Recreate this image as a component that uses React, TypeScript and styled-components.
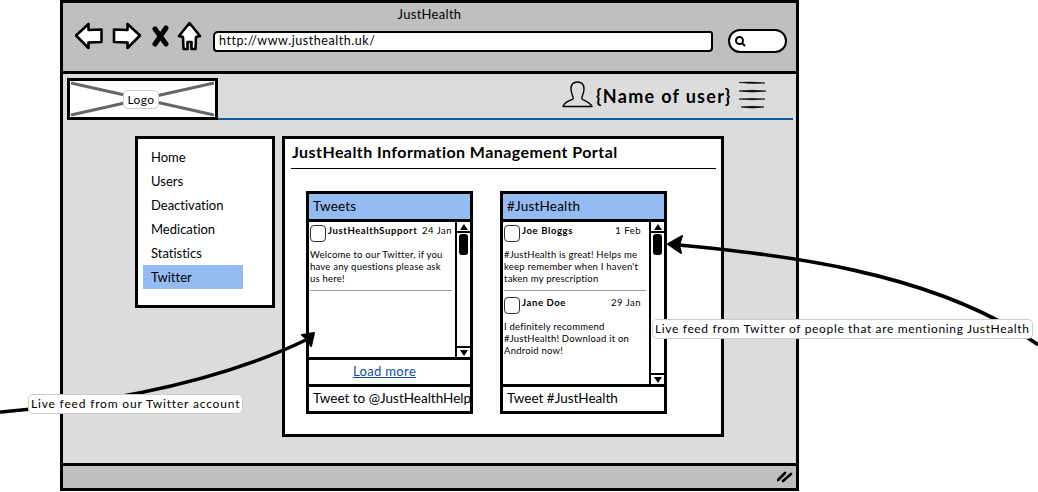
import React from 'react'
import styled, { createGlobalStyle } from 'styled-components'

const GlobalStyle = createGlobalStyle`
    html, body {
        margin: 0;
        padding: 0;
        background: #fff;
        font-family: "Lato", "Open Sans", sans-serif;
        font-variant-ligatures: none;
        color: #000;
    }
    * { box-sizing: border-box; }
`

const Page = styled.div`
    position: relative;
    width: 1038px;
    height: 492px;
    overflow: hidden;
    padding: 0 0 0 60px;
`

const Wireframe = styled.div`
    width: 739px;
    height: 491px;
    border: 3px solid #000;
    display: flex;
    flex-direction: column;
    background: #dcdcdc;
`

const Chrome = styled.div`
    height: 71px;
    flex: none;
    background: #bfbfbf;
    border-bottom: 3px solid #000;
    display: flex;
    flex-direction: column;
`

const WindowTitle = styled.div`
    text-align: center;
    font-size: 13px;
    line-height: 16px;
    margin-top: 3px;
    letter-spacing: 0.3px;
`

const Toolbar = styled.div`
    display: flex;
    align-items: flex-start;
    padding-left: 12px;
`

const NavIcon = styled.svg`
    display: block;
    flex: none;
`

const UrlBar = styled.div`
    width: 500px;
    height: 21px;
    margin: 9px 0 0 10px;
    background: #fff;
    border: 2.5px solid #000;
    border-radius: 5px 3px 4px 4px;
    font-size: 12.5px;
    line-height: 16px;
    padding-left: 4px;
    letter-spacing: 0.55px;
`

const SearchPill = styled.div`
    width: 59px;
    height: 24px;
    margin: 7px 0 0 15px;
    background: #fff;
    border: 2.5px solid #000;
    border-radius: 12px;
    display: flex;
    align-items: center;
    padding-left: 4px;
`

const Body = styled.div`
    flex: 1;
    display: flex;
    flex-direction: column;
`

const Header = styled.div`
    height: 42px;
    flex: none;
    display: flex;
    align-items: flex-start;
    margin: 4px 3px 0 4px;
    border-bottom: 2px solid #0f5aa5;
`

const LogoBox = styled.div`
    position: relative;
    width: 151px;
    height: 42px;
    flex: none;
    background: #fff;
    border: 3px solid #000;
    display: flex;
    align-items: center;
    justify-content: center;
`

const LogoCross = styled.svg`
    position: absolute;
    inset: 0;
    width: 100%;
    height: 100%;
`

const LogoLabel = styled.span`
    position: relative;
    background: #fff;
    border: 1px solid #ccc;
    border-radius: 5px;
    font-size: 12px;
    line-height: 17px;
    letter-spacing: 0.4px;
    padding: 0 3px;
    margin-left: -3px;
`

const UserArea = styled.div`
    flex: 1;
    display: flex;
    align-items: flex-start;
    padding: 3px 0 0 344px;
`

const UserName = styled.span`
    font-size: 18px;
    font-weight: 700;
    line-height: 24px;
    letter-spacing: 1.3px;
    margin: 3px 0 0 3px;
    white-space: nowrap;
`

const Content = styled.div`
    flex: 1;
    display: flex;
    align-items: flex-start;
    gap: 7px;
    padding: 16px 0 0 72px;
`

const SideMenu = styled.nav`
    width: 140px;
    height: 172px;
    flex: none;
    background: #fff;
    border: 3px solid #000;
    padding: 6px 0 0 5px;
`

const MenuItem = styled.div<{ $active?: boolean }>`
    width: 100px;
    height: 24px;
    padding-left: 8px;
    font-size: 13px;
    line-height: 24px;
    background: ${(p) => (p.$active ? '#94bbf2' : 'transparent')};
`

const MainPanel = styled.main`
    width: 442px;
    height: 301px;
    flex: none;
    background: #fff;
    border: 3px solid #000;
    padding: 0 5px 0 6px;
`

const MainTitle = styled.h1`
    margin: 0;
    height: 30px;
    padding-left: 1px;
    font-size: 16px;
    line-height: 26px;
    font-weight: 700;
    letter-spacing: 0.43px;
    border-bottom: 1.5px solid #000;
`

const Columns = styled.div`
    display: flex;
    gap: 27px;
    padding: 22px 0 0 15px;
`

const Feed = styled.section`
    width: 167px;
    height: 223px;
    border: 3px solid #000;
    display: flex;
    flex-direction: column;
    background: #fff;
`

const FeedHeader = styled.div`
    height: 25px;
    flex: none;
    background: #94bbf2;
    font-size: 13.5px;
    line-height: 24px;
    padding-left: 4px;
    letter-spacing: 0.2px;
`

const FeedBody = styled.div`
    flex: 1;
    min-height: 0;
    display: flex;
    border-top: 3px solid #000;
`

const PostList = styled.div`
    flex: 1;
    min-width: 0;
    padding: 3px 3px 0 1px;
`

const Post = styled.article<{ $divider?: boolean }>`
    border-bottom: ${(p) => (p.$divider ? '1.5px solid #9a9a9a' : '0')};
    padding-bottom: 5px;
    margin-bottom: 6px;
`

const PostHead = styled.div`
    display: flex;
    height: 24px;
`

const Avatar = styled.span`
    width: 16px;
    height: 17px;
    flex: none;
    background: #fff;
    border: 1.5px solid #333;
    border-radius: 4px;
`

const PostAuthor = styled.span`
    font-size: 9.5px;
    line-height: 12px;
    font-weight: 700;
    margin-left: 2px;
    letter-spacing: 0.6px;
    white-space: nowrap;
`

const PostDate = styled.span<{ $inset?: number }>`
    margin-left: auto;
    margin-right: ${(p) => p.$inset ?? 0}px;
    font-size: 9.5px;
    line-height: 12px;
    letter-spacing: 0.5px;
    white-space: nowrap;
`

const PostText = styled.p`
    margin: 0;
    font-size: 9.5px;
    line-height: 12px;
    letter-spacing: 0.22px;
    white-space: pre-line;
`

const Scrollbar = styled.div`
    width: 15px;
    flex: none;
    border-left: 2.5px solid #000;
    display: flex;
    flex-direction: column;
    align-items: center;
    justify-content: space-between;
`

const ScrollTop = styled.div`
    width: 100%;
    display: flex;
    flex-direction: column;
    align-items: center;
`

const ScrollButton = styled.div<{ $down?: boolean }>`
    width: 100%;
    height: 11px;
    display: flex;
    align-items: center;
    justify-content: center;
    border-${(p) => (p.$down ? 'top' : 'bottom')}: 2px solid #000;

    &::before {
        content: '';
        border-left: 4px solid transparent;
        border-right: 4px solid transparent;
        border-${(p) => (p.$down ? 'top' : 'bottom')}: 6px solid #000;
    }
`

const ScrollThumb = styled.div`
    width: 9px;
    height: 21px;
    margin-top: 1px;
    background: #000;
    border-radius: 3px;
`

const LoadMore = styled.a`
    height: 27px;
    flex: none;
    border-top: 3px solid #000;
    padding-right: 10px;
    text-align: center;
    font-size: 13px;
    line-height: 23px;
    letter-spacing: 0.35px;
    color: #0b4f9e;
    text-decoration: underline;
`

const TweetBox = styled.div`
    height: 27px;
    flex: none;
    border-top: 3px solid #000;
    font-size: 13.5px;
    line-height: 23px;
    padding-left: 4px;
    white-space: nowrap;
`

const StatusBar = styled.div`
    height: 25px;
    flex: none;
    background: #bfbfbf;
    border-top: 3px solid #000;
    display: flex;
    justify-content: flex-end;
    align-items: center;
    padding-right: 3px;
`

const ArrowLayer = styled.svg`
    position: absolute;
    inset: 0;
    width: 1038px;
    height: 492px;
    pointer-events: none;
`

const Note = styled.div<{ $left: number; $top: number; $spacing: number }>`
    position: absolute;
    left: ${(p) => p.$left}px;
    top: ${(p) => p.$top}px;
    height: 20px;
    padding: 0 2px;
    background: #fff;
    border: 1px solid #ccc;
    border-radius: 5px;
    font-size: 12px;
    line-height: 18px;
    letter-spacing: ${(p) => p.$spacing}px;
    white-space: nowrap;
`

function TweetPost({ name, date, text, inset, divider }: { name: string; date: string; text: string; inset?: number; divider?: boolean }) {
    return (
        <Post $divider={divider}>
            <PostHead>
                <Avatar />
                <PostAuthor>{name}</PostAuthor>
                <PostDate $inset={inset}>{date}</PostDate>
            </PostHead>
            <PostText>{text}</PostText>
        </Post>
    )
}

function FeedScrollbar() {
    return (
        <Scrollbar>
            <ScrollTop>
                <ScrollButton />
                <ScrollThumb />
            </ScrollTop>
            <ScrollButton $down />
        </Scrollbar>
    )
}

const MENU = ['Home', 'Users', 'Deactivation', 'Medication', 'Statistics', 'Twitter']

export default function App() {
    return (
        <Page>
            <GlobalStyle />
            <Wireframe>
                <Chrome>
                    <WindowTitle>JustHealth</WindowTitle>
                    <Toolbar>
                        <NavIcon width="128" height="30" viewBox="0 0 128 30" fill="#fff" stroke="#000" strokeWidth="2.6" strokeLinejoin="round">
                            <path d="M1 13.5 L13.5 2 V8 L26.5 7.5 V20 L13.5 20.5 V26 Z" />
                            <path d="M65 13.5 L52.5 2 V8 L39 7.5 V20 L52.5 20.5 V26 Z" />
                            <path d="M80 7 L91 22 M91 6 L80 22" fill="none" strokeWidth="5" strokeLinecap="round" />
                            <path d="M114.5 1 L125 14 L121 15 L120.5 27 L116.5 27 V20 H112.5 V27 L108.5 27 L108 15 L104 14 Z" />
                        </NavIcon>
                        <UrlBar>http://www.justhealth.uk/</UrlBar>
                        <SearchPill>
                            <svg width="12" height="12" viewBox="0 0 12 12" fill="none" stroke="#000" strokeWidth="2">
                                <circle cx="5.5" cy="5.5" r="3.5" />
                                <path d="M8 8 L11 11" />
                            </svg>
                        </SearchPill>
                    </Toolbar>
                </Chrome>
                <Body>
                    <Header>
                        <LogoBox>
                            <LogoCross viewBox="0 0 145 36" preserveAspectRatio="none" stroke="#666" strokeWidth="3">
                                <path d="M1 2 L144 34 M144 2 L1 34" />
                            </LogoCross>
                            <LogoLabel>Logo</LogoLabel>
                        </LogoBox>
                        <UserArea>
                            <svg width="31" height="27" viewBox="0 0 31 27" fill="none" stroke="#000" strokeWidth="1.4" strokeLinejoin="round">
                                <path d="M1 25.5 C3 20 8 20 11 18 C12 16 9 13 9 8 C9 3 12 1 15.5 1 C19 1 22 3 22 8 C22 13 19 16 20 18 C23 20 28 21 30 25.5 Z" />
                            </svg>
                            <UserName>{'{Name of user}'}</UserName>
                            <svg width="28" height="28" viewBox="0 0 28 28" fill="#000" stroke="#000" strokeWidth="0.6" style={{ marginLeft: 6 }}>
                                <path d="M1 1.5 Q14 .5 27 2 Q14 3 1 1.5 Z M1 10 Q14 8.5 28 10 Q14 12 1 10 Z M1 18 Q14 17 27 18 Q14 19.5 1 18 Z M3 26 Q14 24.5 26 26 Q14 28 3 26 Z" />
                            </svg>
                        </UserArea>
                    </Header>
                    <Content>
                        <SideMenu>
                            {MENU.map((item) => (
                                <MenuItem key={item} $active={item === 'Twitter'}>{item}</MenuItem>
                            ))}
                        </SideMenu>
                        <MainPanel>
                            <MainTitle>JustHealth Information Management Portal</MainTitle>
                            <Columns>
                                <Feed>
                                    <FeedHeader>Tweets</FeedHeader>
                                    <FeedBody>
                                        <PostList>
                                            <TweetPost
                                                divider
                                                name="JustHealthSupport"
                                                date="24 Jan"
                                                text={'Welcome to our Twitter, if you\nhave any questions please ask\nus here!'}
                                            />
                                        </PostList>
                                        <FeedScrollbar />
                                    </FeedBody>
                                    <LoadMore>Load more</LoadMore>
                                    <TweetBox>Tweet to @JustHealthHelp</TweetBox>
                                </Feed>
                                <Feed>
                                    <FeedHeader>#JustHealth</FeedHeader>
                                    <FeedBody>
                                        <PostList>
                                            <TweetPost
                                                divider
                                                name="Joe Bloggs"
                                                date="1 Feb"
                                                inset={5}
                                                text={"#JustHealth is great! Helps me\nkeep remember when I haven't\ntaken my prescription"}
                                            />
                                            <TweetPost
                                                name="Jane Doe"
                                                date="29 Jan"
                                                inset={5}
                                                text={'I definitely recommend\n#JustHealth! Download it on\nAndroid now!'}
                                            />
                                        </PostList>
                                        <FeedScrollbar />
                                    </FeedBody>
                                    <TweetBox>Tweet #JustHealth</TweetBox>
                                </Feed>
                            </Columns>
                        </MainPanel>
                    </Content>
                    <StatusBar>
                        <svg width="16" height="12" viewBox="0 0 16 12" stroke="#000" strokeWidth="2.6" strokeLinecap="round">
                            <path d="M1 9 L8 2 M6 10 L14 3" />
                        </svg>
                    </StatusBar>
                </Body>
            </Wireframe>
            <ArrowLayer viewBox="0 0 1038 492" fill="none" stroke="#000" strokeLinecap="round" strokeLinejoin="round">
                <path d="M1 412 C60 407 200 392 310 338" strokeWidth="3.6" />
                <path d="M302 335 L314 333 L311 346 L308 340 Z" fill="#000" strokeWidth="2" />
                <path d="M670 244 C780 255 930 270 1037 344" strokeWidth="3.6" />
                <path d="M668 244 L682 236 L679 245 L681 253 Z" fill="#000" strokeWidth="2" />
            </ArrowLayer>
            <Note $left={28} $top={394} $spacing={0.82}>Live feed from our Twitter account</Note>
            <Note $left={652} $top={319} $spacing={0.65}>Live feed from Twitter of people that are mentioning JustHealth</Note>
        </Page>
    )
}
